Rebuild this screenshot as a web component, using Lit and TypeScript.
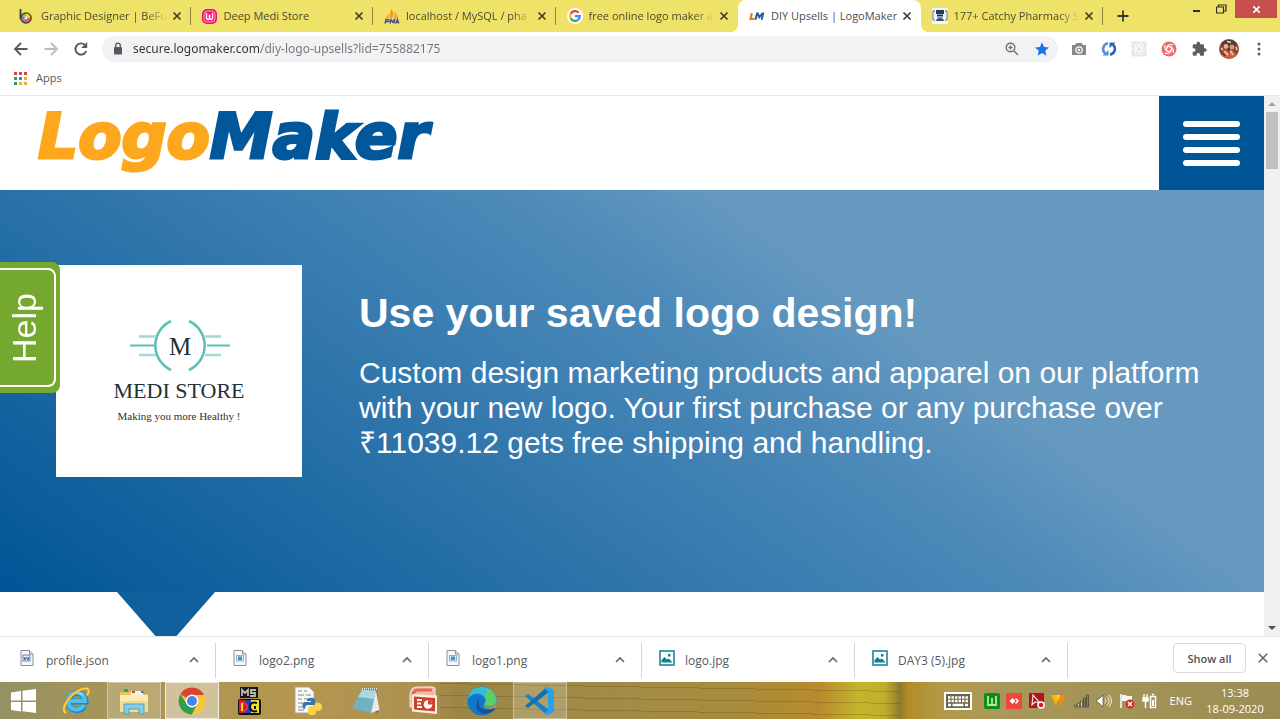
import { LitElement, html, css, svg } from "lit";
import { customElement, property } from "lit/decorators.js";
import { classMap } from "lit/directives/class-map.js";

const icon = (w: number, h: number, body: unknown, box = `0 0 ${w} ${h}`) =>
  html`<svg width=${w} height=${h} viewBox=${box} aria-hidden="true">${body}</svg>`;

const cross = (size: number, color: string, stroke: number) =>
  icon(size, size, svg`<path d="M1.5 1.5 8.5 8.5M8.5 1.5 1.5 8.5" stroke=${color} stroke-width=${stroke} fill="none"/>`, "0 0 10 10");

const favicons = {
  befunky: icon(14, 16, svg`<path d="M1.500 1v10" stroke="#3b3a35" stroke-width="1.800"/><circle cx="7" cy="10" r="5.800" fill="#3b3a35"/><path d="M7 10V5.500A4.500 4.500 0 0 0 2.800 8.500z" fill="#7dc242"/><path d="M7 10V5.500A4.500 4.500 0 0 1 11.500 10z" fill="#f7d21e"/><path d="M7 10H11.500A4.500 4.500 0 0 1 7.500 14.500z" fill="#ef5a28"/><path d="M7 10 2.800 8.500A4.500 4.500 0 0 0 7.500 14.500z" fill="#b968c7"/><circle cx="7" cy="10" r="1.700" fill="#d7e3ea"/>`),
  wamp: icon(15, 15, svg`<rect width="15" height="15" rx="5" fill="#f2106f"/><rect x="2" y="2" width="11" height="11" rx="3.500" fill="none" stroke="#f9a8ca"/><path d="M4.500 4v4.500c0 2.500 3 2.500 3 0V5.500v3c0 2.500 3 2.500 3 0V4" fill="none" stroke="#fff" stroke-width="1.500"/>`),
  pma: icon(16, 15, svg`<path d="M6 9C5 5 7 2 7 0c3 3 3 6 1 9z" fill="#f89c0e"/><path d="M10 9c0-3 1-5 0-7 3 2 4 5 4 7zM1 9c2-1 3-3 3-5 1 2 1 4 1 5z" fill="#f8a93a"/><path d="M1 14.500 2 10.500h2c2 0 1 2.200-.500 2.200H2M6 14.500l1-4 1.500 2.500 2-2.500-.500 4M11.500 14.500l2-4 1.200 4M12 13.300h2" fill="none" stroke="#4b4f86" stroke-width="1.400"/>`),
  google: icon(16, 16, svg`<circle cx="8" cy="8" r="8" fill="#fff"/><g fill="none" stroke-width="2.200"><path d="M11.700 4.700A5 5 0 0 0 3.600 5.800" stroke="#ea4335"/><path d="M3.600 5.800a5 5 0 0 0 0 4.500" stroke="#fbbc05"/><path d="M3.600 10.300a5 5 0 0 0 7.600 1.500" stroke="#34a853"/><path d="M8 8.200h4.800A4.800 4.800 0 0 1 11.200 11.800" stroke="#4285f4"/></g>`),
  lm: icon(16, 16, svg`<path d="M2.800 5 1.600 10.800H5.500" fill="none" stroke="#e87c1e" stroke-width="2.200"/><path d="M6.500 11.800 8 5.500h.8l1.500 3.800 3-3.800h.8L12.700 11.800" fill="none" stroke="#2d5c9e" stroke-width="2"/>`),
  pharmacy: icon(16, 16, svg`<rect width="16" height="16" fill="#f3f5f7"/><path d="M3 3H1v9h2M13 3h2v9h-2" fill="none" stroke="#60707e"/><rect x="4" y="2" width="8" height="4" fill="#233b57"/><rect x="5" y="6" width="6" height="4" fill="#8aa0b4"/><path d="M4 13c0-4 8-4 8 0z" fill="#35506d"/><path d="M5 7.500h6" stroke="#17283d"/>`),
};

const doc = (inner: unknown) => icon(14, 16, svg`<path d="M1 .5h8.500L13 4v11.500H1z" fill="#f7f8f9" stroke="#8b8f94"/><path d="M9.500.5V4H13" fill="#dfe2e5" stroke="#8b8f94"/>${inner}`);
const picture = icon(16, 16, svg`<rect x="1" y="1" width="14" height="14" fill="#fff" stroke="#1c8796" stroke-width="1.600"/><path d="M2.500 12.500V10l3-3 2.500 2.500L10 8.500l3.500 4z" fill="#14808f"/><rect x="9" y="4" width="2.500" height="2.500" fill="#14808f"/>`);
const pngDoc = doc(svg`<rect x="3.500" y="5.500" width="7" height="5.500" fill="#dceaf3" stroke="#8fb4ce"/><rect x="5" y="6.500" width="4" height="3.500" fill="#4a8fbd"/>`);

@customElement("browser-tab")
class BrowserTab extends LitElement {
  @property() label = "";
  @property({ type: Boolean }) active = false;
  @property({ type: Boolean }) divider = false;
  @property({ attribute: false }) favicon: unknown;
  static styles = css`
    :host { display: block; min-width: 0; }
    .tab { position: relative; display: flex; align-items: center; height: 32px; padding: 0 6px 0 11px; box-sizing: border-box; }
    .divided::after { content: ""; position: absolute; right: 0; top: 7px; width: 1px; height: 18px; background: #8d8647; }
    .active { background: #fff; border-radius: 8px 8px 0 0; }
    .active::before, .active::after { content: ""; position: absolute; bottom: 0; width: 8px; height: 8px; }
    .active::before { left: -8px; background: radial-gradient(circle at 0 0, #efe268 8px, #fff 8px); }
    .active::after { right: -8px; background: radial-gradient(circle at 100% 0, #efe268 8px, #fff 8px); }
    .icon { display: flex; flex: 0 0 22px; }
    .select { flex: 1; min-width: 0; padding: 0; border: 0; background: none; text-align: left; white-space: nowrap; overflow: hidden; font: 11px/16px "Open Sans", "Noto Sans", sans-serif; color: #4b4a32; mask-image: linear-gradient(90deg, #000 calc(100% - 22px), transparent calc(100% - 2px)); }
    .active .select { color: #4a4d51; mask-image: none; }
    .full { mask-image: none; }
    .close { display: flex; flex: 0 0 16px; justify-content: center; padding: 3px 0; border: 0; background: none; }
  `;
  render() {
    return html`<div class=${classMap({ tab: true, active: this.active, divided: this.divider })}>
      <span class="icon">${this.favicon}</span>
      <button class=${classMap({ select: true, full: this.label.length < 16 })}>${this.label}</button>
      <button class="close" aria-label="Close tab">${cross(10, "#3f3d2c", 1.7)}</button>
    </div>`;
  }
}

@customElement("download-item")
class DownloadItem extends LitElement {
  @property() name = "";
  @property({ attribute: false }) glyph: unknown;
  static styles = css`
    :host { display: flex; align-items: center; flex: 0 1 213px; min-width: 0; height: 35px; box-sizing: border-box; border-right: 1px solid #d4d5d7; padding: 0 15px 0 17px; }
    .icon { display: flex; flex: 0 0 26px; padding-bottom: 4px; }
    .file { flex: 1; min-width: 0; font: 12px/16px "Open Sans", "Noto Sans", sans-serif; color: #55585c; text-decoration: none; white-space: nowrap; padding-top: 2px; }
    .menu { display: flex; border: 0; padding: 0; background: none; }
  `;
  render() {
    return html`<span class="icon">${this.glyph}</span>
      <a class="file" href="#">${this.name}</a>
      <button class="menu" aria-label="Download options">${icon(12, 12, svg`<path d="M2 8l4-4 4 4" fill="none" stroke="#63676b" stroke-width="1.600"/>`)}</button>`;
  }
}

const tools = {
  camera: icon(16, 16, svg`<path d="M1 4h3l1.500-2h5L12 4h3v10H1z" fill="#85888a"/><circle cx="8" cy="9" r="3.200" fill="none" stroke="#fff" stroke-width="1.200"/><circle cx="8" cy="9" r="1.300" fill="#fff"/>`),
  sync: icon(16, 16, svg`<path d="M7 2.300A5.900 5.900 0 0 0 4.200 12.600" fill="none" stroke="#5b8ed0" stroke-width="2.600"/><path d="M9 13.700A5.900 5.900 0 0 0 11.800 3.400" fill="none" stroke="#2c62b4" stroke-width="2.600"/><path d="M1.500 14.500H7.500V9z" fill="#5b8ed0"/><path d="M14.500 1.500H8.500V7z" fill="#2c62b4"/>`),
  react: icon(16, 16, svg`<rect x=".5" y=".5" width="15" height="15" fill="#e6e7e8"/><g fill="none" stroke="#fafafa"><ellipse cx="8" cy="8" rx="6" ry="2.400"/><ellipse cx="8" cy="8" rx="6" ry="2.400" transform="rotate(60 8 8)"/><ellipse cx="8" cy="8" rx="6" ry="2.400" transform="rotate(120 8 8)"/></g>`),
  spiral: icon(16, 16, svg`<circle cx="8" cy="8" r="7.500" fill="#ee6a73"/><g fill="none" stroke="#fff" stroke-width="1.100"><path d="M8 5.500a2.500 2.500 0 0 1 2.500 2.500c0 3-3 5.500-6.500 4"/><path d="M10.500 8A2.500 2.500 0 0 1 8 10.500C5 10.500 2.500 7.500 4 4"/><path d="M8 10.500A2.500 2.500 0 0 1 5.500 8C5.500 5 8.500 2.500 12 4"/><path d="M5.500 8A2.500 2.500 0 0 1 8 5.500c3 0 5.500 3 4 6.500"/></g>`),
  puzzle: icon(16, 16, svg`<path d="M14 7.300h-1V4.600c0-.7-.6-1.300-1.300-1.300H9v-1a1.700 1.700 0 0 0-3.400 0v1H3c-.7 0-1.300.6-1.300 1.300v2.600h1a1.800 1.800 0 0 1 0 3.600h-1v2.600c0 .7.600 1.300 1.300 1.300h2.500v-1a1.800 1.800 0 0 1 3.600 0v1h2.600c.7 0 1.300-.6 1.300-1.300v-2.700h1a1.700 1.700 0 0 0 0-3.400z" fill="#5b5f63"/>`),
  avatar: icon(20, 20, svg`<circle cx="10" cy="10" r="10" fill="#8a4a38"/><path d="M2 5a10 10 0 0 1 16 0l-4 3H5z" fill="#4c3e34"/><circle cx="7" cy="7.500" r="2.400" fill="#e5b091"/><circle cx="13" cy="8" r="2.400" fill="#d9987a"/><path d="M3 17c1-6 6-7 7-3 2-4 6-2 7 3a10 10 0 0 1-14 0z" fill="#c9603f"/><path d="M5 12l4 4M11 11l3 5M8 2.500l4 1M2 9l2 2M17 8l1 3" stroke="#f4cfae" stroke-width="1.500"/><path d="M9 9l2 3M4 14l2 3" stroke="#5a2720" stroke-width="1.300"/>`),
  dots: icon(4, 16, svg`<circle cx="2" cy="3" r="1.500" fill="#5b5f63"/><circle cx="2" cy="8" r="1.500" fill="#5b5f63"/><circle cx="2" cy="13" r="1.500" fill="#5b5f63"/>`),
};

const apps = [
  { label: "Internet Explorer", state: "", art: icon(30, 30, svg`<path d="M23.500 19.500A8.500 8.500 0 1 1 24.500 15.500H9" fill="none" stroke="#1f86c4" stroke-width="6"/><path d="M23 19A8.500 8.500 0 1 1 24 15H9" fill="none" stroke="#4cc1f0" stroke-width="4"/><path d="M8 13a8.500 8.500 0 0 1 14-4" fill="none" stroke="#a5e6fb" stroke-width="1.300"/><path d="M5 27C-3 23 13 2 25 2.500c4 .5 3 4 1 7" fill="none" stroke="#d99f1b" stroke-width="3"/><path d="M5 27C-3 23 13 2 25 2.500c4 .5 3 4 1 7" fill="none" stroke="#f8d548" stroke-width="1.600"/>`) },
  { label: "File Explorer", state: "open", art: icon(30, 30, svg`<path d="M1 6h11l2 2h14v18H1z" fill="#e6c462"/><path d="M5 3h4v3H5z" fill="#3da446"/><path d="M12 5h12v4H12z" fill="#f7f3e4"/><path d="M13 5h3v2h-3z" fill="#c94a35"/><path d="M22 5h3v2h-3z" fill="#3f87c9"/><path d="M1 9h28v17H1z" fill="#f5dd8f"/><path d="M1 9h28v6H1z" fill="#fbecb4"/><path d="M5 28v-10h20v10h-5v-5H10v5z" fill="#83cbe9" stroke="#4f9fc4"/>`) },
  { label: "Google Chrome", state: "current", art: icon(28, 28, svg`<circle cx="14" cy="14" r="13.500" fill="#f6c73c"/><path d="M14 14 2.300 7.300A13.500 13.500 0 0 1 25.700 7.300L26 8H14z" fill="#d94437"/><path d="M14 14v13.500A13.500 13.500 0 0 1 2.300 7.300l6.500 9.700z" fill="#2f9e4f"/><path d="M14 27.500 19.500 17l-5.500-3-5.200 3z" fill="#2f9e4f"/><path d="M14 27.500 20 16V8h5.900A13.500 13.500 0 0 1 14 27.500z" fill="#f6c73c"/><circle cx="14" cy="14" r="6.400" fill="#fff"/><circle cx="14" cy="14" r="5" fill="#4683ea"/>`) },
  { label: "MS-DOS", state: "", art: icon(26, 30, svg`<path d="M3 1h18v11H3z" fill="#161616"/><path d="M5 10V4l3 3 3-3v6M19 4h-5v3h4v3h-5" fill="none" stroke="#b9b9b9" stroke-width="1.800"/><rect x="1" y="13" width="23" height="16" rx="2" fill="#111"/><rect x="2" y="14" width="6" height="13" fill="#d8211f"/><rect x="8" y="14" width="6" height="13" fill="#1840c4"/><path d="M14 14h8v13h-8z" fill="#efe02a"/><path d="M5 17v8c7 0 7-8 0-8z" fill="none" stroke="#e9353a" stroke-width="2"/><path d="M5 17v8" stroke="#efe02a" stroke-width="2"/><path d="M20 17c-4-1.500-7 0-7 4s4 5 7 4M18 20v3" fill="none" stroke="#111" stroke-width="2"/>`) },
  { label: "Python", state: "", art: icon(30, 30, svg`<path d="M2 1h14l5 5v21H2z" fill="#f7f7f5" stroke="#aaa89c"/><path d="M5 5h4m2 0h3M5 9h6m2 0h5M5 13h4m2 0h4M5 17h5M5 21h4M5 24h6" stroke="#88888a"/><path d="M14 14c0-3 8-3 8 0v5h-7c-2 0-3 1-3 4-4 0-3-7 0-7h6v-1h-4z" fill="#3a74aa"/><path d="M22 17c5-1 8 1 7 5-1 3-3 3-6 3v2c0 3-8 3-8 0v-4c0-2 1-3 3-3h2c2 0 2-1 2-3z" fill="#fbd348"/>`) },
  { label: "Notepad", state: "", art: icon(30, 30, svg`<path d="M12 3h14l2 22-3 2z" fill="#72603b"/><path d="M11 4 25 4.500 20 27 1 22z" fill="#6fb2c0"/><path d="M11 4 25 4.500 23 13 7 11z" fill="#a9d8de"/><path d="M25 4 28.500 24 20 27z" fill="#e7ecea"/><path d="M11 3h15" stroke="#ddd" stroke-width="2" stroke-dasharray="1 1"/>`) },
  { label: "PowerPoint", state: "", art: icon(30, 30, svg`<path d="M1 9Q1 1 9 1h15q3 0 2 4v16H1z" fill="#f3b7a5" stroke="#fbe5dc"/><path d="M4 10Q4 4 9 4h14" fill="none" stroke="#dd6d50" stroke-width="3"/><path d="M3 8 28 9.500V28L3 25.500z" fill="#fbeee9"/><path d="M5 10.500 26 12v13.500L5 23.500z" fill="#cf4323"/><path d="M8 14h5M8 17.500h4M8 21h5" stroke="#fff" stroke-width="1.800"/><circle cx="19" cy="18.500" r="4.300" fill="#fff"/><path d="M19 18.500v-4.300a4.300 4.300 0 0 1 4.300 4.300z" fill="#cf4323"/>`) },
  { label: "Microsoft Edge", state: "", art: icon(30, 30, svg`<circle cx="15" cy="15" r="14.500" fill="#1277c9"/><path d="M1 13C3-4 28-3 29.500 14c0 7-9 8-12 5-1-2 2-2 1-6C15 6 5 6 1 13z" fill="#36bdd2"/><path d="M20 2c6 2 9 7 9.500 12 0 7-9 8-12 5-1-2 2-2 1-6z" fill="#58cf6c"/><path d="M17.500 19c3 3 9 2 12-3-1 2-1 4 0 5-3 6-11 8-15 6-7-3-6-11-2-14-3 6 1 11 8 11 3 0 5-1 6-2" fill="#15519f"/><path d="M17.500 19c3 3 9 2 12-3v6l-6 1c-6 0-8-3-6-4z" fill="#a59453"/>`) },
  { label: "Visual Studio Code", state: "open", art: icon(30, 30, svg`<path d="M0 10 3 8 24 24 22 29z" fill="#1384cc"/><path d="M0 20 3 22 24 6 22 1z" fill="#0f70b4"/><path d="M22 1 29 4v22l-7 3-3-1 4-4V6l-4-4z" fill="#28a1ee"/>`) },
];

const tray = [
  svg`<rect x="0" y="0" width="16" height="16" rx="2" fill="#0c8f16"/><path d="M4 3v9h8V3M8 5v7" fill="none" stroke="#b5e6a4" stroke-width="1.800"/>`,
  svg`<rect width="16" height="16" fill="#f0473d"/><path d="M6.500 5 9.500 8l-3 3-3-3zM10 5l3 3-3 3-1-1 2-2-2-2z" fill="#fff"/>`,
  svg`<rect width="15" height="15" rx="1" fill="#b3131d"/><path d="M3 12 4 2l7 8-5-1z" fill="none" stroke="#f6dfe0" stroke-width="1.200"/><circle cx="12" cy="12" r="3" fill="#d31b25" stroke="#fff" stroke-width="1.500"/>`,
  svg`<path d="M0 2h8L5 13z" fill="#fbb50f"/><path d="M6 2h9L9 14z" fill="#f98a08"/><path d="M6 2h3L7 8z" fill="#ffdb4a"/>`,
  svg`<g stroke="#4c4830" stroke-width=".8" fill="#d9d7c8"><path d="M.5 12h2v2h-2zM3.500 10h2v4h-2zM6.500 8h2v6h-2z"/><path d="M9.500 5h2v9h-2zM12.500 2h2v12h-2z" fill="#85816b"/></g>`,
  svg`<path d="M1 6h2l4-4v12l-4-4H1z" fill="#fff" stroke="#55513a" stroke-width=".7"/><path d="M9 5.500q2 2.500 0 5M11 3.500q4 4.500 0 9M13 2q5 6 0 12" fill="none" stroke="#f1efe4"/>`,
  svg`<path d="M2 1v14" stroke="#fff" stroke-width="1.500"/><path d="M3 2h4l1 1h5v6H8L7 8H3z" fill="#f6f5ee"/><circle cx="11" cy="11" r="4.500" fill="#d62a2a"/><path d="M9 9l4 4m0-4-4 4" stroke="#fff" stroke-width="1.500"/>`,
  svg`<path d="M2 1v4M5 1v4M1 5h5v3H1zM3.500 8v7" fill="#fff" stroke="#fff" stroke-width="1.400"/><path d="M8.500 3.500h5v11h-5zM10 1.500h2" fill="none" stroke="#fff" stroke-width="1.500"/><rect x="10" y="7" width="2" height="6" fill="#fff"/>`,
];

@customElement("app-root")
class AppRoot extends LitElement {
  static styles = css`
    :host { display: flex; flex-direction: column; height: 100vh; overflow: hidden; background: #fff; font-family: "Open Sans", "Noto Sans", sans-serif; }
    button { font-family: inherit; margin: 0; padding: 0; border: 0; background: none; }
    svg { display: block; flex: none; }

    .strip { display: flex; flex: 0 0 32px; padding-left: 8px; background: #efe268; }
    .tabs { flex: 1; min-width: 0; display: grid; grid-template-columns: repeat(6, minmax(0, 1fr)); }
    .frame { display: flex; flex: 0 0 177px; }
    .new { flex: 0 0 40px; display: flex; align-items: center; justify-content: center; }
    .window { margin-left: auto; display: flex; height: 18px; }
    .window button { display: flex; align-items: center; justify-content: center; width: 24px; }
    .window .shut { width: 42px; margin: 0 3px 0 2px; background: #c7504f; }

    .toolbar { display: flex; flex: 0 0 33px; align-items: center; padding: 0 6px 0 6px; }
    .tool { display: flex; flex: 0 0 30px; height: 26px; align-items: center; justify-content: center; }
    .omnibox { flex: 1; min-width: 0; display: flex; align-items: center; height: 26px; margin: 0 6px; padding: 0 1px 0 11px; border-radius: 13px; background: #f1f2f4; }
    .url { flex: 1; min-width: 0; margin: 0 0 0 10px; padding: 0; border: 0; outline: 0; font: 12px/20px "Noto Sans", "Open Sans", sans-serif; color: transparent; background: linear-gradient(90deg, #303235 128px, #71757a 128px); background-clip: text; -webkit-background-clip: text; }
    .bookmarks { display: flex; flex: 0 0 31px; align-items: center; box-sizing: border-box; padding: 0 14px 4px; border-bottom: 1px solid #e6e7e9; }
    .apps { display: flex; align-items: center; gap: 9px; font-size: 11px; line-height: 16px; color: #55585c; text-decoration: none; }

    .view { flex: 1; min-height: 0; display: flex; }
    .page { position: relative; flex: 1; min-width: 0; overflow: hidden; font-family: "Liberation Sans", Arial, sans-serif; }
    .site { display: flex; justify-content: space-between; height: 94px; }
    .brand { padding-left: 38px; font: italic bold 63px/82px "DejaVu Sans", sans-serif; color: #01579a; text-decoration: none; -webkit-text-stroke: 3px currentColor; }
    .brand span { color: #fca71d; }
    .burger { display: flex; flex-direction: column; align-items: center; justify-content: center; gap: 7px; width: 105px; background: #005596; }
    .burger i { width: 57px; height: 6px; border-radius: 3px; background: #fff; }
    .hero { display: flex; align-items: flex-start; gap: 57px; box-sizing: border-box; min-height: 402px; padding: 75px 56px 0; background: linear-gradient(36deg, #005596, #4d8ab9 58%, #6699c0 70%); color: #fff; }
    .card { flex: 0 0 246px; background: #fff; }
    .copy { flex: 1; min-width: 0; padding-top: 24px; }
    h1 { margin: 0; font-size: 41px; line-height: 48px; }
    p { margin: 18px 0 0; font-size: 30px; line-height: 35px; }
    .pointer { width: 98px; height: 56px; margin-left: 117px; background: #10609e; clip-path: polygon(0 0, 100% 0, 50% 100%); }
    .help { position: absolute; left: 0; top: 166px; width: 60px; height: 131px; padding: 6px 4px 6px 0; border-radius: 0 8px 8px 0; background: #74a82e; }
    .help span { display: flex; align-items: center; justify-content: center; box-sizing: border-box; width: 100%; height: 100%; padding-right: 6px; border: 2px solid #fff; border-left: 0; border-radius: 0 8px 8px 0; }
    .help b { writing-mode: vertical-rl; transform: rotate(180deg); font: 34px/40px "Liberation Sans", sans-serif; color: #fff; }
    .scroll { flex: 0 0 16px; display: flex; flex-direction: column; align-items: center; justify-content: space-between; padding: 6px 0; box-sizing: border-box; background: #f1f1f1; }
    .thumb { width: 12px; height: 57px; margin: 6px 0 auto; background: #c1c1c1; }

    .downloads { display: flex; flex: 0 0 46px; align-items: center; box-sizing: border-box; padding: 1px 11px 0 3px; border-top: 1px solid #e3e4e6; }
    .close-group { display: flex; align-items: center; gap: 11px; margin-left: auto; padding-bottom: 4px; }
    .all { flex: none; width: 73px; height: 30px; border: 1px solid #d9dbdf; border-radius: 4px; font-size: 11px; font-weight: 600; color: #4f5256; }

    .taskbar { display: flex; flex: 0 0 37px; align-items: center; background: repeating-linear-gradient(1deg, transparent 0 11px, rgba(80, 60, 20, .25) 11px 12px) 440px 0 / 460px 100% no-repeat, linear-gradient(90deg, #959063 0, #aa9657 130px, #b59650 300px, #ac9150 420px, #9b8646 460px, #a08c48 600px, #a88b3c 740px, #b88b2c 820px, #c5b52c 860px, #bfae2c 885px, #8f7a30 900px, #b28c28 908px, #b39a48 940px, #a9985a 1000px, #9a8d54 1280px); }
    .start { display: flex; flex: 0 0 47px; justify-content: center; margin-right: 2px; }
    .running { display: flex; gap: 4px; }
    .task { display: flex; width: 54px; height: 37px; box-sizing: border-box; align-items: center; justify-content: center; border: 1px solid transparent; }
    .open { background: rgba(255, 255, 255, .18); border-color: rgba(255, 255, 255, .35); }
    .current { background: rgba(255, 255, 255, .42); border-color: rgba(255, 255, 255, .7); }
    .tray { margin-left: auto; display: flex; align-items: center; color: #fff; font-size: 11px; line-height: 16px; padding-right: 12px; }
    .icons { display: flex; justify-content: space-between; width: 174px; margin: 0 12px; }
    .clock { width: 66px; margin-left: 10px; text-align: center; white-space: nowrap; }
  `;

  render() {
    return html`
      <nav class="strip">
        <div class="tabs">
          <browser-tab label="Graphic Designer | BeFun" divider .favicon=${favicons.befunky}></browser-tab>
          <browser-tab label="Deep Medi Store" divider .favicon=${favicons.wamp}></browser-tab>
          <browser-tab label="localhost / MySQL / pha" divider .favicon=${favicons.pma}></browser-tab>
          <browser-tab label="free online logo maker a" .favicon=${favicons.google}></browser-tab>
          <browser-tab label="DIY Upsells | LogoMaker" active .favicon=${favicons.lm}></browser-tab>
          <browser-tab label="177+ Catchy Pharmacy S" divider .favicon=${favicons.pharmacy}></browser-tab>
        </div>
        <div class="frame">
          <button class="new" aria-label="New tab">${icon(12, 12, svg`<path d="M6 .5v11M.5 6h11" stroke="#37362a" stroke-width="1.800"/>`)}</button>
          <div class="window">
            <button aria-label="Minimize">${icon(10, 10, svg`<path d="M1 7h7" stroke="#2e2d22" stroke-width="2"/>`)}</button>
            <button aria-label="Restore">${icon(11, 11, svg`<path d="M.5 3h7v6h-7zM2.500 3V1h7.500v6H8" fill="none" stroke="#2e2d22" stroke-width="1.200"/>`)}</button>
            <button class="shut" aria-label="Close window">${cross(9, "#fff", 1.8)}</button>
          </div>
        </div>
      </nav>

      <div class="toolbar">
        <button class="tool" aria-label="Back">${icon(16, 16, svg`<path d="M14.500 8H2.500M8 2 2 8l6 6" fill="none" stroke="#55595d" stroke-width="1.800"/>`)}</button>
        <button class="tool" aria-label="Forward">${icon(16, 16, svg`<path d="M1.500 8h12M8 2l6 6-6 6" fill="none" stroke="#b9bbbd" stroke-width="1.800"/>`)}</button>
        <button class="tool" aria-label="Reload">${icon(16, 16, svg`<path d="M13.300 10A5.600 5.600 0 1 1 12 4" fill="none" stroke="#55595d" stroke-width="1.900"/><path d="M14.200 1v6H8.200z" fill="#55595d"/>`)}</button>
        <div class="omnibox">
          ${icon(10, 14, svg`<rect x="1" y="5" width="8" height="7.500" rx="1" fill="#55595d"/><path d="M2.700 5.500V3.500a2.300 2.300 0 0 1 4.600 0v2" fill="none" stroke="#55595d" stroke-width="1.300"/>`)}
          <input class="url" aria-label="Address" value="secure.logomaker.com/diy-logo-upsells?lid=755882175" />
          <button class="tool" aria-label="Zoom">${icon(14, 14, svg`<circle cx="5.500" cy="5.500" r="4.300" fill="none" stroke="#6b6f73" stroke-width="1.400"/><path d="M8.800 8.800 13 13M3.500 5.500h4M5.500 3.500v4" stroke="#6b6f73" stroke-width="1.400"/>`)}</button>
          <button class="tool" aria-label="Bookmark">${icon(14, 14, svg`<path d="M7 .3 9 5l5 .4-3.800 3.300 1.200 5L7 11l-4.400 2.700 1.200-5L0 5.400 5 5z" fill="#1a73e8"/>`)}</button>
        </div>
        <button class="tool" aria-label="Screenshot">${tools.camera}</button>
        <button class="tool" aria-label="Sync">${tools.sync}</button>
        <button class="tool" aria-label="React">${tools.react}</button>
        <button class="tool" aria-label="Assistant">${tools.spiral}</button>
        <button class="tool" aria-label="Extensions">${tools.puzzle}</button>
        <button class="tool" aria-label="Profile">${tools.avatar}</button>
        <button class="tool" aria-label="Menu">${tools.dots}</button>
      </div>

      <div class="bookmarks">
        <a class="apps" href="#">${icon(13, 13, svg`<path d="M0 0h3v3H0zM5 0h3v3H5zM10 0h3v3h-3z" fill="#d8453a"/><path d="M0 5h3v3H0z" fill="#3a9c58"/><path d="M5 5h3v3H5z" fill="#3f7fe6"/><path d="M10 5h3v3h-3z" fill="#f0ad2c"/><path d="M0 10h3v3H0z" fill="#3a9c58"/><path d="M5 10h3v3H5zM10 10h3v3h-3z" fill="#f0ad2c"/>`)}Apps</a>
      </div>

      <div class="view">
        <main class="page">
          <header class="site">
            <a class="brand" href="#"><span>Logo</span>Maker</a>
            <button class="burger" aria-label="Open menu"><i></i><i></i><i></i><i></i></button>
          </header>
          <section class="hero">
            <div class="card">
              <svg width="246" height="212" viewBox="0 0 246 212" role="img" aria-label="Medi Store logo">
                <g fill="none" stroke="#5bbfb5">
                  <path d="M115 56A27 27 0 0 0 115 105M133 56A27 27 0 0 1 133 105" stroke-width="2.500"/>
                  <path d="M74 80.500H98M151 80.500H174" stroke-width="2.200"/>
                  <path d="M83 71.500H100M149 71.500H165M83 90H100M149 90H165" stroke="#9fd9d2" stroke-width="2.500"/>
                </g>
                <g fill="#1f3236" text-anchor="middle" font-family="Liberation Serif, serif">
                  <text x="124" y="90" font-size="25">M</text>
                  <text x="123" y="133" font-size="22">MEDI STORE</text>
                  <text x="123" y="155" font-size="11">Making you more Healthy !</text>
                </g>
              </svg>
            </div>
            <div class="copy">
              <h1>Use your saved logo design!</h1>
              <p>Custom design marketing products and apparel on our platform with your new logo. Your first purchase or any purchase over ₹11039.12 gets free shipping and handling.</p>
            </div>
          </section>
          <div class="pointer"></div>
          <button class="help"><span><b>Help</b></span></button>
        </main>
        <div class="scroll">
          ${icon(8, 4, svg`<path d="M0 4 4 0l4 4z" fill="#a3a3a3"/>`)}
          <div class="thumb"></div>
          ${icon(8, 4, svg`<path d="M0 0h8L4 4z" fill="#505050"/>`)}
        </div>
      </div>

      <div class="downloads">
        <download-item name="profile.json" .glyph=${doc(svg`<rect x="3" y="5" width="7" height="6" fill="#e6ebf5" stroke="#6c83b4"/><path d="M4 7l1 3 1.500-3L8 10l1-3" fill="none" stroke="#3d5ea6"/>`)}></download-item>
        <download-item name="logo2.png" .glyph=${pngDoc}></download-item>
        <download-item name="logo1.png" .glyph=${pngDoc}></download-item>
        <download-item name="logo.jpg" .glyph=${picture}></download-item>
        <download-item name="DAY3 (5).jpg" .glyph=${picture}></download-item>
        <div class="close-group">
          <button class="all">Show all</button>
          <button aria-label="Close downloads bar">${cross(12, "#5b5f63", 1.2)}</button>
        </div>
      </div>

      <footer class="taskbar">
        <button class="start" aria-label="Start">${icon(26, 24, svg`<path d="M0 3.500 10 2v9.500H0zM11.500 1.800 25 0v11.500H11.500zM0 13h10v9.500L0 21zM11.500 13H25v11l-13.500-1.800z" fill="#fff"/>`)}</button>
        <div class="running">
          ${apps.map((a) => html`<button class=${classMap({ task: true, open: a.state === "open", current: a.state === "current" })} aria-label=${a.label}>${a.art}</button>`)}
        </div>
        <div class="tray">
          ${icon(28, 18, svg`<rect x="1" y="1" width="26" height="16" fill="#6d6547" stroke="#fff" stroke-width="2"/><path d="M4 5.500h20M4 9h20" stroke="#fff" stroke-width="2.500" stroke-dasharray="2.500 1"/><path d="M4 13h3M8.500 13h11M21 13h3" stroke="#fff" stroke-width="2.500"/>`)}
          <div class="icons">${tray.map((t) => icon(16, 16, t))}</div>
          <span>ENG</span>
          <div class="clock"><div>13:38</div><div>18-09-2020</div></div>
        </div>
      </footer>
    `;
  }
}
